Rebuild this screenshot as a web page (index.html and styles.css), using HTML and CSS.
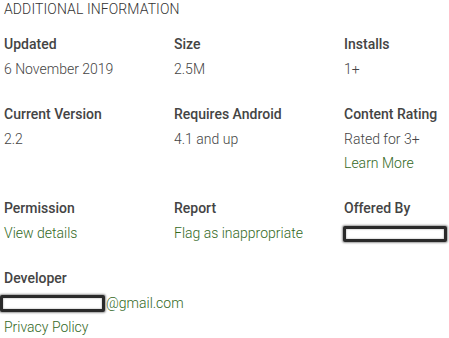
FILE: index.html
```html
<!DOCTYPE html>
<html>
<head>
<meta charset="utf-8">
<link rel="stylesheet" href="styles.css">
</head>
<body>
<div class="info">
  <h2 class="title">ADDITIONAL INFORMATION</h2>
  <div class="grid">
    <div class="cell">
      <div class="label">Updated</div>
      <div class="value">6 November 2019</div>
    </div>
    <div class="cell">
      <div class="label">Size</div>
      <div class="value">2.5M</div>
    </div>
    <div class="cell">
      <div class="label">Installs</div>
      <div class="value">1+</div>
    </div>
    <div class="cell">
      <div class="label">Current Version</div>
      <div class="value">2.2</div>
    </div>
    <div class="cell">
      <div class="label">Requires Android</div>
      <div class="value">4.1 and up</div>
    </div>
    <div class="cell">
      <div class="label">Content Rating</div>
      <div class="value">Rated for 3+</div>
      <div class="value"><a class="link" href="#">Learn More</a></div>
    </div>
    <div class="cell">
      <div class="label">Permission</div>
      <div class="value"><a class="link" href="#">View details</a></div>
    </div>
    <div class="cell">
      <div class="label">Report</div>
      <div class="value"><a class="link" href="#">Flag as inappropriate</a></div>
    </div>
    <div class="cell">
      <div class="label">Offered By</div>
      <div class="value"><span class="redact redact-offered"></span></div>
    </div>
    <div class="cell">
      <div class="label">Developer</div>
      <div class="value dev"><span class="redact redact-dev"></span><a class="link" href="#">@gmail.com</a></div>
      <div class="value"><a class="link" href="#">Privacy Policy</a></div>
    </div>
  </div>
</div>
</body>
</html>
```

FILE: styles.css
```css
html, body {
  margin: 0;
  padding: 0;
  background: #fff;
}
body {
  font-family: Roboto, "Noto Sans", sans-serif;
  color: #333;
  overflow: hidden;
}
.info {
  padding: 0 4px;
}
.title {
  margin: 0;
  font-size: 14px;
  font-weight: 300;
  line-height: 18px;
  color: #333;
  letter-spacing: 0.1px;
}
.grid {
  display: grid;
  grid-template-columns: 170px 170px 101px;
  row-gap: 20px;
  margin-top: 13px;
}
.label {
  font-size: 14px;
  font-weight: 500;
  line-height: 26px;
  color: #444;
}
.value {
  font-size: 14px;
  font-weight: 300;
  line-height: 24px;
  color: #444;
  white-space: nowrap;
}
.link {
  color: #33691e;
  text-decoration: none;
}
.dev {
  display: flex;
  align-items: center;
  margin-left: -4px;
}
.redact {
  display: inline-block;
  flex-shrink: 0;
  background: #fff;
  border: 3px solid #2a2a2a;
  border-radius: 2px;
  box-shadow: 0 0 2px 1px rgba(0,0,0,0.4), inset 0 0 2px rgba(0,0,0,0.4);
  box-sizing: border-box;
  vertical-align: middle;
}
.redact-offered {
  width: 104px;
  height: 16px;
  margin-left: -1px;
}
.redact-dev {
  width: 105px;
  height: 17px;
  margin-right: 1px;
}
```
